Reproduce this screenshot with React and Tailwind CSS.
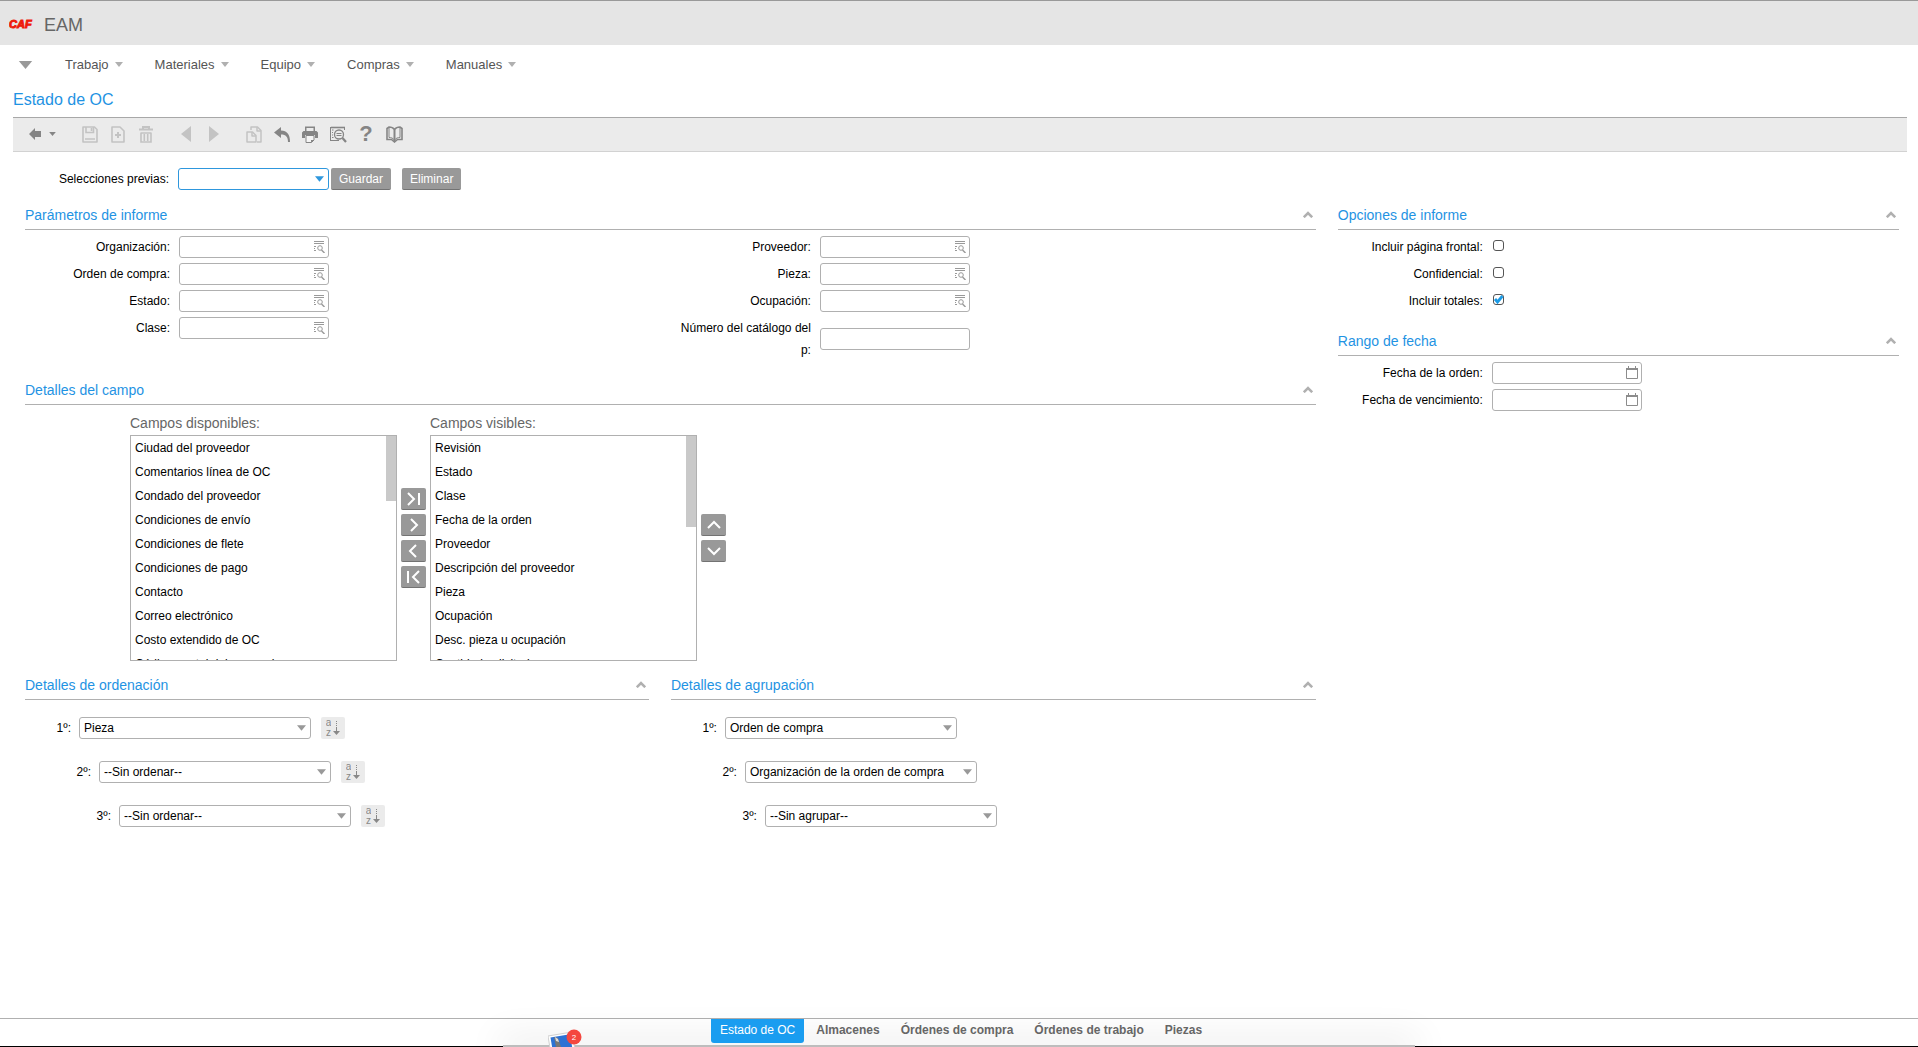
import { useState } from "react"

const menus = ["Trabajo", "Materiales", "Equipo", "Compras", "Manuales"]

const availableFields = [
  "Ciudad del proveedor",
  "Comentarios línea de OC",
  "Condado del proveedor",
  "Condiciones de envío",
  "Condiciones de flete",
  "Condiciones de pago",
  "Contacto",
  "Correo electrónico",
  "Costo extendido de OC",
  "Código postal del proveedor",
]

const visibleFields = [
  "Revisión",
  "Estado",
  "Clase",
  "Fecha de la orden",
  "Proveedor",
  "Descripción del proveedor",
  "Pieza",
  "Ocupación",
  "Desc. pieza u ocupación",
  "Cantidad solicitada",
]

const tabs = ["Estado de OC", "Almacenes", "Órdenes de compra", "Órdenes de trabajo", "Piezas"]

function Caret({ className }) {
  return (
    <svg viewBox="0 0 10 6" className={className} fill="currentColor" aria-hidden="true">
      <path d="M0 0h10L5 6z" />
    </svg>
  )
}

function LookupIcon() {
  return (
    <svg width="12" height="12" viewBox="0 0 12 12" fill="none" stroke="#999" aria-hidden="true">
      <path d="M1 .5h10M1 2.5h10" />
      <path d="M1 5.5h2M1 7.5h1M1 9.5h2" />
      <circle cx="7" cy="7" r="2.3" />
      <path d="M8.5 9l3 3" strokeWidth="1.4" />
    </svg>
  )
}

function CalendarIcon() {
  return (
    <svg width="12" height="13" viewBox="0 0 12 13" fill="none" stroke="#8c8c8c" className="mb-px" aria-hidden="true">
      <path d="M.5 3v9.500h11V3" />
      <path d="M0 3h12" strokeWidth="2" />
      <path d="M2.500 0v2M9.500 0v2" />
    </svg>
  )
}

function ToolButton({ label, disabled, children, className = "w-7" }) {
  return (
    <button
      type="button"
      aria-label={label}
      disabled={disabled}
      className={`h-7 shrink-0 flex items-center justify-center ${disabled ? "text-[#c3c3c3]" : "text-[#858585]"} ${className}`}
    >
      {children}
    </button>
  )
}

function Toolbar() {
  return (
    <div className="ml-[13px] mr-[11px] h-[35px] pl-2 pb-px flex items-center bg-[#ebebeb] border-t border-t-[#a8a8a8] border-b border-b-[#d2d2d2]">
      <ToolButton label="Volver">
        <svg width="12" height="12" viewBox="0 0 12 12" fill="currentColor">
          <path d="M0 6l6-6v3h6v6H6v3z" />
        </svg>
      </ToolButton>
      <ToolButton label="Historial" className="w-[7px] mr-5">
        <Caret className="w-[7px] h-1" />
      </ToolButton>

      <ToolButton label="Guardar registro" disabled>
        <svg width="16" height="17" viewBox="0 0 16 17" fill="none" stroke="currentColor" strokeWidth="1.6">
          <path d="M1 1h11.5L15 3.500V16H1z" strokeLinejoin="round" />
          <path d="M4 1v5.500h7.500V1M9.500 2v3M3 13h10" />
        </svg>
      </ToolButton>
      <ToolButton label="Nuevo registro" disabled>
        <svg width="14" height="17" viewBox="0 0 14 17" fill="none" stroke="currentColor" strokeWidth="1.6">
          <path d="M1 1h8l4 4v11H1z" strokeLinejoin="round" />
          <path d="M7 6v6M4 9h6" strokeWidth="2" />
        </svg>
      </ToolButton>
      <ToolButton label="Eliminar registro" disabled>
        <svg width="14" height="17" viewBox="0 0 14 17" fill="none" stroke="currentColor" strokeWidth="1.6">
          <path d="M0 3.500h14M4 3V1h6v2" strokeWidth="2" />
          <path d="M2 6.500V16h10V6.500M2 7h10M5.300 8v7M8.700 8v7" />
        </svg>
      </ToolButton>

      <ToolButton label="Anterior" disabled className="w-7 ml-3">
        <svg width="10" height="16" viewBox="0 0 10 16" fill="currentColor">
          <path d="M10 0v16L0 8z" />
        </svg>
      </ToolButton>
      <ToolButton label="Siguiente" disabled className="w-7 mr-3">
        <svg width="10" height="16" viewBox="0 0 10 16" fill="currentColor">
          <path d="M0 0v16l10-8z" />
        </svg>
      </ToolButton>

      <ToolButton label="Copiar" disabled>
        <svg width="16" height="17" viewBox="0 0 16 17" fill="none" stroke="currentColor" strokeWidth="1.5" strokeLinejoin="round">
          <path d="M5 4V1h6.500L15 4.500V16h-4" />
          <path d="M11 1v4h4" />
          <path d="M1 6h5.500L10 9.500V16H1z" />
          <path d="M6 6v4h4" />
        </svg>
      </ToolButton>
      <ToolButton label="Deshacer">
        <svg width="16" height="16" viewBox="0 0 16 16" fill="currentColor">
          <path d="M0 6.500L7 1v3.500c6 0 9 4 9 11.500h-2c0-5-2-7.500-7-7.500V12z" />
        </svg>
      </ToolButton>
      <ToolButton label="Imprimir">
        <svg width="16" height="17" viewBox="0 0 16 17" fill="currentColor">
          <path d="M3 .5h10V5h-1.500V2h-7v3H3z" />
          <path d="M0 6.500L1.500 5h13L16 6.500V12h-3V9H3v3H0z" />
          <path d="M4 9.500h8V14l-2.500 2.500H4z" fill="#f4f4f4" stroke="currentColor" />
          <path d="M9 16.500V14h3z" />
        </svg>
      </ToolButton>
      <ToolButton label="Vista previa">
        <svg width="17" height="17" viewBox="0 0 17 17" fill="none" stroke="currentColor">
          <path d="M1 1.500h14" strokeWidth="1.600" />
          <path d="M2 4h1.500M2 6.500h1M2 9h1M2 11.500h1.500M1 14.500h8M14.500 2v2" />
          <path d="M.5 1v14" />
          <circle cx="9" cy="8.500" r="4.500" strokeWidth="1.300" />
          <path d="M6.500 7.500h5M6.500 9.500h5" />
          <path d="M12.500 12l3.500 4" strokeWidth="2.200" />
        </svg>
      </ToolButton>
      <ToolButton label="Ayuda">
        <span className="text-[22px] leading-6 font-bold">?</span>
      </ToolButton>
      <ToolButton label="Manual">
        <svg width="17" height="17" viewBox="0 0 17 17" fill="none" stroke="currentColor" strokeWidth="1.600">
          <path d="M8.500 3.500C7 1.500 5 1 3 1L1 2.500V13.500h4.500l3 2.500 3-2.500H16V2.500L14 1c-2 0-4 .5-5.500 2.500z" />
          <path d="M8.500 3.500V15" strokeWidth="2" />
          <path d="M3 1v10.500c2 0 4 .5 5.500 2.500 1.500-2 3.500-2.500 5.500-2.500V1" strokeWidth="1" />
        </svg>
      </ToolButton>
    </div>
  )
}

function Section({ title, className = "", children }) {
  return (
    <section className={className}>
      <div className="h-[30px] flex items-center justify-between border-b border-[#b0b0b0]">
        <h2 className="text-sm text-[#1f93e3]">{title}</h2>
        <button type="button" aria-label={`Contraer ${title}`} className="px-[3px] text-[#b0b0b0]">
          <svg width="10" height="7" viewBox="0 0 10 7" fill="none" stroke="currentColor" strokeWidth="2.600">
            <path d="M.8 6.200L5 2l4.200 4.200" />
          </svg>
        </button>
      </div>
      {children}
    </section>
  )
}

function Field({ id, label, icon }) {
  return (
    <div className="flex items-center gap-[9px]">
      <label htmlFor={id} className="w-[145px] pl-[5px] shrink-0 text-right leading-[22px]">
        {label}
      </label>
      <div className="w-[150px] h-[22px] flex items-center pr-[3px] rounded-[3px] border border-[#b0b0b0] bg-white">
        <input id={id} type="text" className="min-w-0 flex-1 px-1 outline-none" />
        {icon}
      </div>
    </div>
  )
}

function CheckField({ id, label, defaultChecked }) {
  return (
    <div className="h-[22px] flex items-center gap-[9px]">
      <label htmlFor={id} className="w-[145px] shrink-0 text-right">
        {label}
      </label>
      <span className="relative flex mb-[3px] ml-px">
        <input
          id={id}
          type="checkbox"
          defaultChecked={defaultChecked}
          className="peer size-[11px] appearance-none rounded-[3px] border border-[#555] bg-white"
        />
        <svg
          viewBox="0 0 11 11"
          className="absolute inset-0 size-[11px] hidden peer-checked:block pointer-events-none"
          fill="none"
          stroke="#1c9be6"
          strokeWidth="2.800"
        >
          <path d="M2 5l2.500 3L9.500 2" />
        </svg>
      </span>
    </div>
  )
}

function Dropdown({ id, options, className }) {
  return (
    <div className={`relative h-[22px] ${className}`}>
      <select id={id} className="size-full appearance-none rounded-[3px] border border-current pl-1 pr-5 bg-white outline-none">
        {options.map((o) => (
          <option key={o}>{o}</option>
        ))}
      </select>
      <Caret className="absolute right-[5px] top-2 w-[9px] h-[6px] pointer-events-none" />
    </div>
  )
}

function FieldList({ id, label, items, thumb }) {
  return (
    <div className="w-[267px]">
      <label htmlFor={id} className="block h-[22px] text-sm leading-5 text-[#666]">
        {label}
      </label>
      <div className="relative h-[226px] border border-[#b0b0b0]">
        <select id={id} multiple className="block size-full overflow-hidden appearance-none bg-white outline-none">
          {items.map((item) => (
            <option key={item} className="px-1 py-[5px] text-xs leading-[14px]">
              {item}
            </option>
          ))}
        </select>
        <div className={`absolute right-0 top-0 w-[10px] bg-[#c9c9c9] ${thumb}`} />
      </div>
    </div>
  )
}

function MoveButton({ label, d }) {
  return (
    <button
      type="button"
      aria-label={label}
      className="w-[25px] h-[22px] flex items-center justify-center rounded-[2px] bg-[#999] border-b border-[#737373] text-white"
    >
      <svg width="15" height="14" viewBox="0 0 15 14" fill="none" stroke="currentColor" strokeWidth="2">
        <path d={d} />
      </svg>
    </button>
  )
}

function SortButton({ label }) {
  return (
    <button type="button" aria-label={label} className="ml-[10px] w-6 h-[22px] flex justify-center items-center gap-[2px] rounded-[2px] bg-[#ebebeb] text-[#888]">
      <span className="flex flex-col text-[10px] leading-[10px]">
        <span className="h-[10px] overflow-hidden">a</span>
        <span className="h-[10px] overflow-hidden">z</span>
      </span>
      <svg width="7" height="14" viewBox="0 0 7 14" fill="none" stroke="currentColor">
        <path d="M3.500 0v7" strokeDasharray="1 1" />
        <path d="M3.500 7v5" />
        <path d="M0 10h7l-3.500 4z" fill="currentColor" stroke="none" />
      </svg>
    </button>
  )
}

function OrderRow({ id, label, options, indent, sortable }) {
  return (
    <div className={`flex items-center ${indent}`}>
      <label htmlFor={id} className="w-[46px] mr-2 text-right">
        {label}
      </label>
      <div className="text-[#999]">
        <Dropdown id={id} options={options} className="w-[232px] [&>select]:text-black [&>select]:border-[#b0b0b0]" />
      </div>
      {sortable && <SortButton label={`Orden ${label}`} />}
    </div>
  )
}

function ActionButton({ children, className = "" }) {
  return (
    <button type="button" className={`h-[22px] px-2 rounded-[2px] bg-[#999] border-b border-[#737373] text-white ${className}`}>
      {children}
    </button>
  )
}

function BottomBar() {
  const [active, setActive] = useState("Estado de OC")

  return (
    <footer className="relative mt-auto h-[29px] border-t border-[#b0b0b0]">
      <div className="absolute bottom-0 inset-x-0 h-px bg-black" />
      {/* dock sliding in under the window */}
      <div className="absolute bottom-0 left-[26.2%] right-[26.2%] h-[2px] bg-[#bdbdbd] shadow-[0_0_36px_4px_rgba(0,0,0,0.16)]" />
      <div className="absolute bottom-0 left-[548px] w-9 h-[18px] overflow-hidden">
        <svg width="36" height="18" viewBox="0 0 36 18">
          <path d="M0 7l24-4 4 24-24 4z" fill="#fff" stroke="#cfcfcf" />
          <path d="M2.500 8.500l19.500-3.300 3.500 21-19.500 3z" fill="#2d72d4" />
          <path d="M6 8l4 1 3 9H8z" fill="#777" />
          <path d="M7 8l3 2 1 3-3-1z" fill="#ddd" />
          <circle cx="26" cy="8" r="7.500" fill="#f4473f" />
          <text x="26" y="11" fontSize="8" fill="#fff" textAnchor="middle">2</text>
        </svg>
      </div>
      <nav className="relative pl-1 flex justify-center gap-[3px]">
        {tabs.map((t) => (
          <button
            key={t}
            type="button"
            onClick={() => setActive(t)}
            className={
              active === t
                ? "h-6 px-[9px] pb-[2px] rounded-b-[3px] bg-[#1a9df0] text-white"
                : "h-6 px-[9px] pb-[2px] font-bold text-[#666]"
            }
          >
            {t}
          </button>
        ))}
      </nav>
    </footer>
  )
}

export default function App() {
  return (
    <div className="min-h-screen flex flex-col bg-white text-black text-xs font-['Liberation_Sans',Arial,sans-serif]">
      <header className="h-[45px] flex items-center border-t border-[#999] bg-[#e5e5e5] pt-1">
        <svg width="26" height="12" viewBox="0 0 26 12" className="ml-[9px] mb-[2px]" role="img" aria-label="CAF">
          <text x="0" y="10" fontSize="11" fontWeight="bold" fontStyle="italic" fill="#ee1c0c" stroke="#ee1c0c" strokeWidth="1">
            CAF
          </text>
        </svg>
        <h1 className="ml-[9px] text-lg text-[#666]">EAM</h1>
      </header>

      <nav className="h-10 flex items-center text-[13px] text-[#555]">
        <button type="button" aria-label="Menú" className="ml-[18px] mr-8 text-[#999]">
          <Caret className="w-[15px] h-2" />
        </button>
        {menus.map((m) => (
          <button key={m} type="button" className="mr-8 flex items-center gap-[6px]">
            {m}
            <Caret className="w-2 h-[5px] text-[#b0b0b0]" />
          </button>
        ))}
      </nav>

      <h2 className="h-7 mb-1 ml-[13px] leading-[30px] text-base text-[#1f93e3]">Estado de OC</h2>
      <Toolbar />

      <main className="pl-[25px] pr-[19px] pb-6">
        <div className="mt-4 flex items-center">
          <label htmlFor="previas" className="w-36 mr-[9px] text-right">
            Selecciones previas:
          </label>
          <div className="mr-[2px] text-[#2e97dd]">
            <Dropdown id="previas" options={[""]} className="w-[151px]" />
          </div>
          <ActionButton className="mr-[11px]">Guardar</ActionButton>
          <ActionButton>Eliminar</ActionButton>
        </div>

        <div className="mt-[10px] grid grid-cols-[23fr_10fr] gap-[22px] items-start">
          <div>
            <Section title="Parámetros de informe">
              <div className="pt-[6px] grid grid-cols-[641fr_650fr] items-start">
                <div className="flex flex-col gap-[5px]">
                  <Field id="organizacion" label="Organización:" icon={<LookupIcon />} />
                  <Field id="orden" label="Orden de compra:" icon={<LookupIcon />} />
                  <Field id="estado" label="Estado:" icon={<LookupIcon />} />
                  <Field id="clase" label="Clase:" icon={<LookupIcon />} />
                </div>
                <div className="flex flex-col gap-[5px]">
                  <Field id="proveedor" label="Proveedor:" icon={<LookupIcon />} />
                  <Field id="pieza" label="Pieza:" icon={<LookupIcon />} />
                  <Field id="ocupacion" label="Ocupación:" icon={<LookupIcon />} />
                  <Field id="catalogo" label="Número del catálogo del p:" />
                </div>
              </div>
            </Section>

            <Section title="Detalles del campo" className="mt-[14px]">
              <div className="pt-2 pl-[105px] flex gap-1">
                <FieldList id="disponibles" label="Campos disponibles:" items={availableFields} thumb="h-[65px]" />
                <div className="pt-[75px] flex flex-col gap-1">
                  <MoveButton label="Agregar todos" d="M2 1l6 6-6 6M13 1v12" />
                  <MoveButton label="Agregar" d="M5 1l6 6-6 6" />
                  <MoveButton label="Quitar" d="M10 1L4 7l6 6" />
                  <MoveButton label="Quitar todos" d="M13 1L7 7l6 6M2 1v12" />
                </div>
                <FieldList id="visibles" label="Campos visibles:" items={visibleFields} thumb="h-[91px]" />
                <div className="pt-[101px] flex flex-col gap-1">
                  <MoveButton label="Subir" d="M2 10l6-6 6 6" />
                  <MoveButton label="Bajar" d="M2 4l6 6 6-6" />
                </div>
              </div>
            </Section>

            <div className="mt-[9px] grid grid-cols-[624fr_645fr] gap-[22px]">
              <Section title="Detalles de ordenación">
                <div className="pt-[17px] flex flex-col gap-[22px]">
                  <OrderRow id="orden1" label="1º:" options={["Pieza"]} indent="pl-0" sortable />
                  <OrderRow id="orden2" label="2º:" options={["--Sin ordenar--"]} indent="pl-5" sortable />
                  <OrderRow id="orden3" label="3º:" options={["--Sin ordenar--"]} indent="pl-10" sortable />
                </div>
              </Section>
              <Section title="Detalles de agrupación">
                <div className="pt-[17px] flex flex-col gap-[22px]">
                  <OrderRow id="grupo1" label="1º:" options={["Orden de compra"]} indent="pl-0" />
                  <OrderRow id="grupo2" label="2º:" options={["Organización de la orden de compra"]} indent="pl-5" />
                  <OrderRow id="grupo3" label="3º:" options={["--Sin agrupar--"]} indent="pl-10" />
                </div>
              </Section>
            </div>
          </div>

          <div>
            <Section title="Opciones de informe">
              <div className="pt-[6px] flex flex-col gap-[5px]">
                <CheckField id="frontal" label="Incluir página frontal:" />
                <CheckField id="confidencial" label="Confidencial:" />
                <CheckField id="totales" label="Incluir totales:" defaultChecked />
              </div>
            </Section>
            <Section title="Rango de fecha" className="mt-[14px]">
              <div className="pt-[6px] flex flex-col gap-[5px]">
                <Field id="fecha" label="Fecha de la orden:" icon={<CalendarIcon />} />
                <Field id="vencimiento" label="Fecha de vencimiento:" icon={<CalendarIcon />} />
              </div>
            </Section>
          </div>
        </div>
      </main>

      <BottomBar />
    </div>
  )
}
